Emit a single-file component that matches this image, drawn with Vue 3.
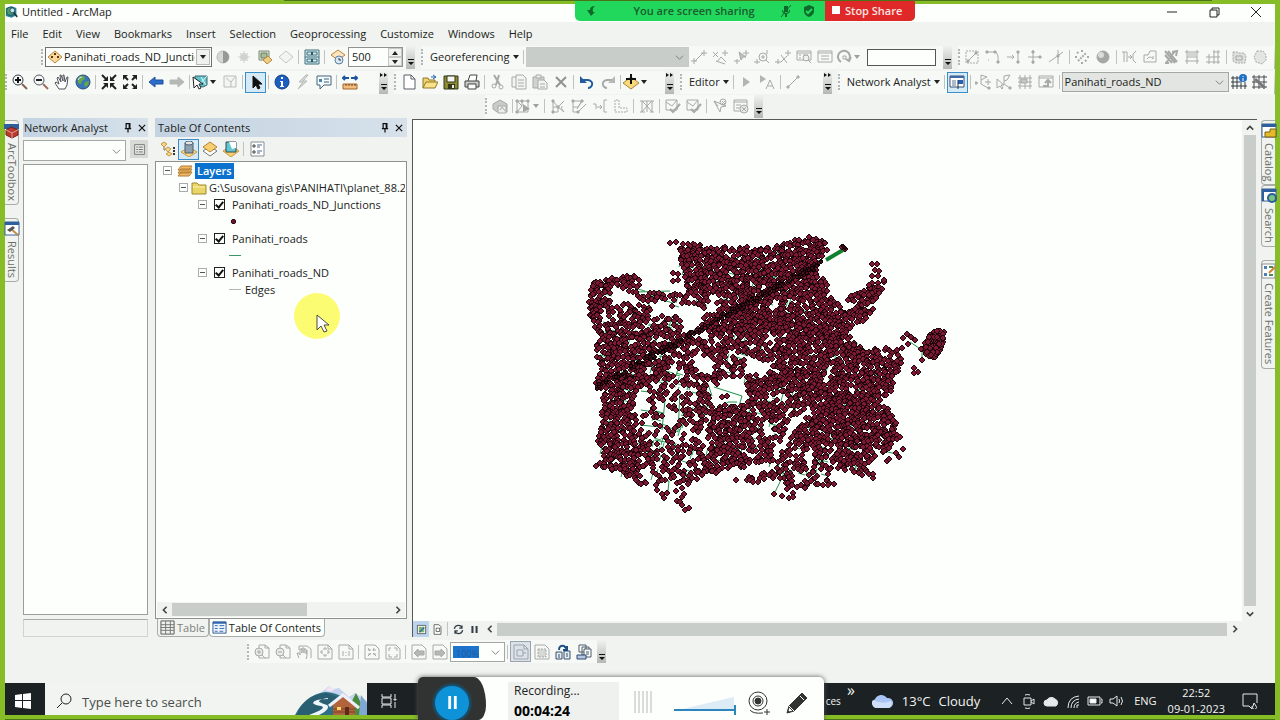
<script setup>
import { ref } from 'vue';

const menus = ['File', 'Edit', 'View', 'Bookmarks', 'Insert', 'Selection', 'Geoprocessing', 'Customize', 'Windows', 'Help'];

// Icon bodies, all drawn on a 16x16 grid
const icons = {
  contrast: '<circle cx="8" cy="8" r="6" fill="#d5d8d5" stroke="#b4b8b4"/><path d="M8 2a6 6 0 0 1 0 12z" fill="#969a96" stroke="none"/>',
  sun: '<circle cx="8" cy="8" r="4" fill="#d3d6d3" stroke="none"/><path d="M8 2v12M2 8h12M4 4l8 8M12 4l-8 8" stroke="#cfd2cf"/>',
  swipe: '<path d="M2 2h10v9H2z" fill="#dbe6cf" stroke="#7c8777"/><path d="M4 4h6v5H4z" fill="#a5bf99" stroke="#6b7d68"/><path d="M6 11l5-4 4 4-5 4z" fill="#f2cd86" stroke="#b9883e"/>',
  diamond: '<path d="M1 8l7-6 7 6-7 6z" fill="#f3f4f2" stroke="#c3c6c3"/>',
  cabinet: '<path d="M1 1h14v14H1z" fill="#d8ecee" stroke="#3f6f7c"/><path d="M1 8h14M3 3h10v3H3zM3 10h10v3H3z" stroke="#3f6f7c"/><path d="M7 3h2v3H7zM7 10h2v3H7z" fill="#2a5966" stroke="none"/>',
  layertime: '<path d="M1 6l7-5 7 5-7 5z" fill="#fbe6c1" stroke="#c08334"/><circle cx="9" cy="11" r="4" fill="#d8e8f4" stroke="#5d7e9d"/><path d="M9 9v2h2" stroke="#234"/>',
  links: '<path d="M4 12L12 4M3 9v6M0 12h6M13 1v6M10 4h6"/>',
  autolink: '<path d="M4 12l9 3M1 3l5 5M1 8l5-5M13 1v6M10 4h6M5 13l4-5 5 5"/>',
  selectlink: '<path d="M4 10v5M1 12h6M13 1v6M10 4h6M6 3l2 8 2-3h3z" fill="#bfc3bf"/>',
  zoomlink: '<circle cx="9" cy="8" r="4"/><path d="M9 6v4M7 8h4M12 11l3 3M3 10v5M0 13h6M13 1v4"/>',
  deletelink: '<path d="M3 10v5M0 13h6M13 1v6M10 4h6M6 6l6 8M12 7l-6 6"/>',
  tablezoom: '<path d="M1 2h14v9H1zM1 4h14M3 6h2M3 9h2M7 6h5"/><circle cx="10" cy="9" r="3" fill="#edf0ed"/><path d="M12 11l3 3"/>',
  table: '<path d="M1 2h14v11H1zM1 4h14M4 7h2M4 10h2M10 7h2M10 10h2M6 7h4M6 10h4"/>',
  rotate: '<path d="M5 13a6 6 0 1 1 8-2M10 10l3 2 2-4" stroke-width="2"/><path d="M7 7h3v3H7z"/>',
  sketchbox: '<path d="M2 2h12v12H2z" stroke-dasharray="2 1"/><path d="M4 12l8-8"/><path d="M3 11h2v2H3zM11 3h2v2h-2z" fill="#a3a7a3"/>',
  curve: '<path d="M2 3h8q4 1 3 11"/><path d="M1 2h2v2H1zM9 2h2v2H9zM12 12h2v2h-2z" fill="#a3a7a3"/><path d="M3 11h1"/>',
  intersectline: '<path d="M1 8h7M6 6l2 2-2 2M12 2v12"/><path d="M11 2h2v2h-2zM11 12h2v2h-2z" fill="#a3a7a3"/>',
  extendline: '<path d="M6 1v14M1 8h13"/><path d="M5 2h2v2H5zM5 12h2v2H5zM12 7h2v2h-2z" fill="#a3a7a3"/>',
  crossing: '<path d="M1 13L15 3M10 1v14"/><path d="M9 6h2v2H9z" fill="#a3a7a3"/>',
  scatter: '<path d="M4 12l8-8M8 1v2M8 13v2M1 8h2M13 8h2M3 3l2 2M11 11l2 2" stroke-width="2" stroke-dasharray="2 1"/>',
  sphere: '<circle cx="8" cy="8" r="6" fill="#a4a8a4" stroke="#a4a8a4"/><circle cx="6" cy="6" r="3" fill="#dadcda" stroke="none"/>',
  mergeline: '<path d="M1 3h5v10M3 3v10M7 8h3M9 6l2 2-2 2M15 2l-3 3v6l3 3"/>',
  reshape: '<path d="M2 13V6h4l2-4h6v11zM5 10q3-4 6 0M11 10V7"/>',
  modify: '<path d="M2 2l10 12M5 2l9 11M2 6l7 8M9 3l5-1-1 5M3 14l9-12M2 14h4" stroke-width="2"/>',
  grid1: '<path d="M3 1v14M13 1v14M1 3h14M1 12h14M3 8h10"/><path d="M4 4h8v4H4z" fill="#d2d5d2" stroke="none"/>',
  grid2: '<path d="M4 5v10M9 1v14M13 1v14M1 8h14M1 13h14M8 3h7"/>',
  cloudbox: '<path d="M2 3h4l2 1h5l2 3-1 7H5l-3-2z" fill="#dcdfdc" stroke-dasharray="2 1"/><path d="M5 7h6v4H5z"/>',
  hexagon: '<path d="M5 2h6l3 4v5l-4 4-6-2-2-5z" fill="#e2e5e2" stroke-dasharray="2 1"/>',
  zoomin: '<circle cx="6" cy="6" r="5" fill="#f3f8fa" stroke="#333a40"/><path d="M3 6h6M6 3v6" stroke="#111" stroke-width="2"/><path d="M10 10l5 5" stroke="#8a6050" stroke-width="2"/>',
  zoomout: '<circle cx="6" cy="6" r="5" fill="#f3f8fa" stroke="#555c60"/><path d="M3 6h6" stroke="#222" stroke-width="2"/><path d="M10 10l5 5" stroke="#a0705c" stroke-width="2"/>',
  hand: '<path d="M5 15L1 9l1-1 3 2-2-6 1-1 3 5-1-7h1l2 6V1h1l1 7 2-5h1l-1 8-2 4z" fill="#fff" stroke="#50545a"/>',
  globe: '<circle cx="8" cy="8" r="7" fill="#3779b8" stroke="#2a4d73"/><path d="M3 4q3-3 6-2l1 3-3 2-1 3-3-1zM10 8l4-1q0 4-3 6l-2-2z" fill="#6aa44c" stroke="none"/><path d="M3 6q1-3 4-3" stroke="#d7f0f8"/>',
  fixedin: '<path d="M1 1l4 4M15 1l-4 4M1 15l4-4M15 15l-4-4" stroke="#222" stroke-width="2"/><path d="M7 2v5H2zM9 2v5h5zM7 14V9H2zM9 14V9h5z" fill="#222" stroke="none"/>',
  fixedout: '<path d="M2 2l4 4M14 2l-4 4M2 14l4-4M14 14l-4-4" stroke="#222" stroke-width="2"/><path d="M1 6V1h5zM15 6V1h-5zM1 10v5h5zM15 10v5h-5z" fill="#222" stroke="none"/>',
  back: '<path d="M1 8l6-5v3h8v4H7v3z" fill="#2c6ccb" stroke="#1f4f9f"/>',
  forward: '<path d="M15 8L9 3v3H1v4h8v3z" fill="#b5b8b5" stroke="#b5b8b5"/>',
  selectfeat: '<path d="M3 2h12v9l-4 2-8-2z" fill="#5fc4cb" stroke="#3d6268"/><path d="M15 2L7 11M9 3l5 8" stroke="#e2f4f3"/><path d="M1 3l1 11 3-3 2 4 2-1-2-4h4z" fill="#fff" stroke="#222"/>',
  clearfeat: '<path d="M2 2h12v11H2z" fill="#f3f5f3" stroke="#b9bdb9"/><path d="M4 4l5 4 4-5M9 8v5" stroke="#b9bdb9"/>',
  pointer: '<path d="M5 2v12l3-3 2 4 2-1-2-4h4z" fill="#111" stroke="#111"/>',
  info: '<circle cx="8" cy="8" r="7" fill="#1d5fc0" stroke="#153e80"/><path d="M7 3h2v2H7zM6 7h3v5h1v1H6v-1h1V8H6z" fill="#fff" stroke="none"/>',
  bolt: '<path d="M11 1L4 8h4l-5 7 9-8H8l5-6z" fill="#d8dbd8" stroke="#b5b8b5"/>',
  popup: '<path d="M1 2h14v9H8l-4 4v-4H1z" fill="#f6fafc" stroke="#44637b"/><path d="M3 5h3v3H3z" fill="#4784b4" stroke="none"/><path d="M8 5h5M8 8h5" stroke="#44637b"/>',
  measure: '<path d="M1 10h14v5H1z" fill="#f3bd7d" stroke="#a3662c"/><path d="M4 10v2M7 10v2M10 10v2M13 10v2" stroke="#6c3f17"/><path d="M1 4h6M9 4h6M3 2L1 4l2 2M13 2l2 2-2 2" stroke="#1d559f" stroke-width="2"/>',
  newdoc: '<path d="M3 1h7l4 4v10H3z" fill="#fff" stroke="#596068"/><path d="M10 1v4h4" stroke="#596068"/>',
  open: '<path d="M1 14V4h5l1 2h6v3" fill="#f0d56e" stroke="#8e7626"/><path d="M1 14l3-6h12l-3 6z" fill="#f8e38a" stroke="#8e7626"/><path d="M9 3h4M11 1l3 2-3 2" stroke="#1f65ab"/>',
  save: '<path d="M1 2h14v13H1z" fill="#8a8b31" stroke="#35371c"/><path d="M4 2h8v6H4z" fill="#f4f4f0" stroke="#35371c"/><path d="M5 10h7v5H5z" fill="#35371c" stroke="none"/><path d="M9 11h2v3H9z" fill="#eee" stroke="none"/>',
  print: '<path d="M4 7l2-6h7l-1 6" fill="#fff" stroke="#444"/><path d="M1 7h14v6H1z" fill="#c8ccc8" stroke="#444"/><path d="M4 10h8v5H4z" fill="#fff" stroke="#444"/>',
  cut: '<path d="M4 1l6 10M9 1L6 11" stroke-width="2"/><circle cx="4" cy="12" r="2"/><circle cx="11" cy="13" r="2"/>',
  copy: '<path d="M1 3h8v10H1z" fill="#f3f5f3"/><path d="M5 1h7l3 3v11H5z" fill="#f3f5f3"/><path d="M7 6h6M7 9h6M7 12h6"/>',
  paste: '<path d="M1 3h11v11H1z" fill="#d0d3d0"/><path d="M4 1h5v3H4z" fill="#eee"/><path d="M6 6h6l3 3v6H6z" fill="#f3f5f3"/><path d="M8 10h5M8 13h5"/>',
  cross: '<path d="M3 3l10 10M13 3L3 13" stroke="#8f938f" stroke-width="2"/>',
  undo: '<path d="M4 6h5q5 1 4 5-1 3-4 3" stroke="#225c9d" stroke-width="2"/><path d="M1 2v7h7z" fill="#225c9d" stroke="none"/>',
  redo: '<path d="M12 6H7q-5 1-4 5 1 3 4 3" stroke-width="2"/><path d="M15 2v7H8z" fill="#b5b8b5" stroke="none"/>',
  adddata: '<path d="M0 9l8-6 8 6-8 6z" fill="#f9d979" stroke="#a3843b"/><path d="M8 0v10M3 5h10" stroke="#111" stroke-width="2"/>',
  play: '<path d="M5 3v10l7-5z" fill="#b2b5b2" stroke="none"/>',
  playa: '<path d="M1 1v8l6-4z" fill="#b2b5b2" stroke="none"/><path d="M7 15l4-9 4 9M9 12h4"/>',
  segment: '<path d="M3 13L13 3"/><path d="M2 12h2v2H2zM12 2h2v2h-2z" fill="#b5b8b5"/>',
  nawindow: '<path d="M1 2h14v11H1z" fill="#fff" stroke="#3a5374"/><path d="M1 2h14v2H1z" fill="#3d6aa5" stroke="none"/><path d="M3 7h4M3 9h4M3 11h4" stroke="#5d7690"/><path d="M9 6h5v4H9z" fill="#2760b5" stroke="none"/><path d="M9 6v9" stroke="#1d3555"/>',
  nalocation: '<path d="M1 9h2M6 1v9l7 4M6 1l6 2-6 3M10 8h6M13 5v6"/><path d="M0 8h2v2H0zM13 13h2v2h-2z" fill="#b2b5b2"/>',
  namove: '<path d="M1 5v9l3-2 2 3 1-1-2-3h3zM8 2v8l6 4M8 2l6-1-3 5-3 1"/><path d="M13 13h2v2h-2z" fill="#b2b5b2"/>',
  nabarrier: '<path d="M3 1v14M8 1v14M13 1v14M1 4h14M1 8h14M1 12h14"/><path d="M4 5h6v4H4z" fill="#c4c8c4"/>',
  nadirection: '<path d="M1 2h14v11H1zM1 4h14"/><path d="M5 12h5V7M7 9l3-3 3 3" stroke-width="2"/>',
  netinfo: '<path d="M2 2v13M6 2v13M10 7v8M14 8v7M0 4h9M0 8h9M0 12h16" stroke="#333c44"/><circle cx="12" cy="4" r="4" fill="#1f6fc4" stroke="none"/><path d="M12 2v1M12 4v3" stroke="#fff"/>',
  nettool: '<path d="M2 1v14M7 1v14M12 1v14M0 3h15M0 8h15M0 13h15" stroke="#444c50"/><path d="M3 5l10 9" stroke="#777" stroke-width="3"/>',
  topobox: '<path d="M1 6l7-4 7 4v8H5l-4-3z" fill="#c8ccc8"/><path d="M6 8h8v7H6z" fill="#eee"/><path d="M8 12l2-3 3 4"/>',
  topoedit: '<path d="M2 3h11v11H2zM2 3l5 5M2 14l5-6V3"/><path d="M1 2h2v2H1zM6 2h2v2H6zM12 2h2v2h-2zM1 13h2v2H1z" fill="#a2a6a2"/><path d="M8 6v8l7-3z" fill="#a2a6a2" stroke="none"/>',
  topomod: '<path d="M3 3v11M3 14h5V9l6 5M3 3l5 6 6-6M12 8q-2 2 2 6M3 9h5"/><path d="M2 2h2v2H2zM2 13h2v2H2zM7 8h2v2H7z" fill="#a3a7a3"/>',
  topoalign: '<path d="M2 3h9l-5 8M2 3v11h5l8-8M2 9h5l4-6"/><path d="M1 2h2v2H1zM10 2h2v2h-2zM6 13h2v2H6z" fill="#a3a7a3"/>',
  topocut: '<path d="M1 6h3v5M5 9h4M8 7l2 2-2 2M15 2h-3v12h3"/>',
  topoduct: '<path d="M2 2v12h12v-4H6V2z" stroke-dasharray="2 1"/>',
  topobuild: '<path d="M3 3v11M8 3v11M13 3v11M3 3l5 5 5-5M3 14l5-6 5 6M1 3h14M1 14h5M11 14h4"/>',
  topocheck: '<path d="M1 2h11v10H1zM1 4l6 4 5-6"/><path d="M5 11l3 3 7-8" stroke-width="2"/>',
  topoerror: '<path d="M2 3l6 11 1-5 5-1zM2 3l4 5"/><circle cx="11" cy="4" r="3"/><path d="M10 3l3 3M13 3l-3 3"/>',
  topolist: '<path d="M1 2h13v11H1zM1 4h13M3 7h5M3 10h4"/><circle cx="11" cy="11" r="4" fill="#e8ebe8"/><path d="M9 9l4 4M13 9l-4 4"/>',
  pagein: '<path d="M5 1h6l4 3v10H5zM11 1v3h4"/><circle cx="5" cy="8" r="4" fill="#e8ebe8"/><path d="M3 8h4M5 6v4M8 11l3 3"/>',
  pageout: '<path d="M5 1h6l4 3v10H5zM11 1v3h4"/><circle cx="5" cy="8" r="4" fill="#e8ebe8"/><path d="M3 8h4M8 11l3 3"/>',
  pagehand: '<path d="M3 2h8l4 3v9M3 2v4M3 14L1 9h2l1 2V5h2v4V4h2v5V5h2v5l1-4v6l-1 3"/>',
  pagefit: '<path d="M1 1h10l4 4v10H1zM11 1v4h4M8 3v2M8 11v2M3 8h2M11 8h2M6 5h4M6 11h4M5 6v4M11 6v4"/>',
  page1: '<path d="M1 1h10l4 4v10H1zM11 1v4h4M5 7v5M11 7v5M8 8v1M8 11v1"/>',
  pagefixin: '<path d="M1 1h10l4 4v10H1zM4 4l2 3M10 4L9 7M4 12l3-3M12 12l-3-3M4 6h3M9 6h3M4 10h3M9 10h3"/>',
  pagefixout: '<path d="M1 1h10l4 4v10H1zM4 7V4h2M9 4h3v3M4 10v3h3M9 13h3v-3"/>',
  pageback: '<path d="M1 1h10l4 4v10H1z"/><path d="M3 9l4-4v2h6v4H7v2z" fill="#b5b8b5"/>',
  pagefwd: '<path d="M1 1h10l4 4v10H1z"/><path d="M13 9L9 5v2H3v4h6v2z" fill="#b5b8b5"/>',
  toggledraft: '<path d="M1 1h10l4 4v10H1zM11 1v4h4M4 6h6v6H4zM10 9h3" stroke="#9aa3ad"/>',
  focusframe: '<path d="M1 1h10l4 4v10H1z"/><path d="M4 5h8v8H4z" fill="#d5d8d5" stroke-dasharray="2 1"/>',
  changelayout: '<path d="M1 8h6v7H1zM9 7h6v8H9z" fill="#e4eef6" stroke="#3b4f66"/><path d="M4 6q0-5 5-4l3 3M12 2v4H8" stroke="#1d4f87" stroke-width="2"/><path d="M3 11h2M3 13h2M11 10h2M11 12h2" stroke="#3b4f66"/>',
  datadriven: '<path d="M3 1h7v7H3zM6 3h7v8H6z" fill="#fff" stroke="#4b5a68"/><path d="M8 5h7v8H8zM10 8h3M10 10h3" fill="#fff" stroke="#4b5a68"/><path d="M1 11h9v4H1z" fill="#b8c9df" stroke="#2f4974"/>',
  listdraw: '<path d="M1 3l3-2 3 2-3 3zM5 8l3-2 3 2-3 3zM6 13l3-2 3 2-3 2z" fill="#f8d685" stroke="#c29a45"/><path d="M4 6v3h1" stroke="#777"/><path d="M13 7h2M13 10h2M13 13h2" stroke="#333" stroke-width="2"/>',
  listsource: '<path d="M0 11l8-5 8 5-8 5z" fill="#fad888" stroke="#c89a44"/><path d="M4 2h8v10H4z" fill="#8fa0af" stroke="#4f5d6a"/><ellipse cx="8" cy="2" rx="4" ry="2" fill="#dfe6ea" stroke="#4f5d6a"/>',
  listvis: '<path d="M1 10l7-5 7 5-7 5z" fill="#fff" stroke="#777"/><path d="M1 6l7-5 7 5-7 5z" fill="#f9ce71" stroke="#b28336"/>',
  listsel: '<path d="M0 10l8-5 8 5-8 6z" fill="#f9ce71" stroke="#c29a45"/><path d="M3 1h10v10H3z" fill="#5fc7d3" stroke="#35474f"/><path d="M6 1l3 7 4-1V1z" fill="#fff" stroke="none"/>',
  options: '<path d="M2 1h13v14H2z" fill="#fff" stroke="#8a8f94"/><path d="M4 4h2v2H4zM4 10h2v2H4z" stroke="#444"/><path d="M8 4h5M8 6h3M8 10h5M8 12h3" stroke="#4f6a8c"/>',
  properties: '<path d="M2 2h12v12H2z" fill="#e8ebe8" stroke="#666"/><path d="M4 5h2M4 8h2M4 11h2M7 5h5M7 8h5M7 11h5" stroke="#555"/>',
  layers: '<path d="M1 13l3-4h11l-3 4zM1 10l3-4h11l-3 4zM1 7l3-4h11l-3 4z" fill="#f1b866" stroke="#b17c32"/>',
  folder: '<path d="M1 14V3h5l2 2h7v9z" fill="#e9d568" stroke="#9d8a2e"/><path d="M2 7h12" stroke="#fff3a5"/>',
  tabtable: '<path d="M1 1h14v14H1z" fill="#eef1ee" stroke="#555"/><path d="M1 5h14M1 8h14M1 11h14M6 1v14M11 1v14" stroke="#6f7571"/>',
  tabtoc: '<path d="M1 2h14v12H1z" fill="#eef5fc" stroke="#2b5592"/><path d="M1 2h14v2H1z" fill="#2f65ad" stroke="none"/><path d="M3 6h3M3 9h3M3 12h3M8 6h5M8 9h5M8 12h4" stroke="#2f65ad"/>',
  toolbox: '<path d="M0 1h15v5H0z" fill="#2d5f9f" stroke="none"/><path d="M2 7l5-3 7 3v5l-6 3-6-3z" fill="#b93b30" stroke="#712019"/><path d="M2 7l6 3 6-3M8 10v5" stroke="#e79a8b"/>',
  results: '<path d="M1 1h14v13H1z" fill="#fff" stroke="#39608f"/><path d="M1 1h14v3H1z" fill="#2d5f9f" stroke="none"/><path d="M7 8l7 6" stroke="#c28b4a" stroke-width="2"/><path d="M3 9l6-4 2 2-5 4z" fill="#555" stroke="none"/>',
  catalog: '<path d="M1 1h14v13H1z" fill="#fff" stroke="#39608f"/><path d="M1 1h14v3H1z" fill="#2d5f9f" stroke="none"/><path d="M4 14V9h5V6h6v8z" fill="#e4ba28" stroke="#7b6214"/>',
  search: '<path d="M1 1h14v12H1z" fill="#fff" stroke="#39608f"/><path d="M1 1h14v3H1zM3 4v9H1V4z" fill="#2d5f9f" stroke="none"/><circle cx="11" cy="10" r="4" fill="#7dc17e" stroke="#285d9d" stroke-width="2"/>',
  create: '<path d="M1 1h13v14H1z" fill="#fff" stroke="#8a8f94"/><path d="M3 3h3v3H3zM3 10h3v3H3z" fill="#4d7fb5" stroke="none"/><path d="M8 4h4M8 12h4" stroke="#4c8c53" stroke-width="2"/><path d="M8 10l6-6" stroke="#d08531" stroke-width="2"/>',
  pin: '<path d="M5 1h6v8H5zM10 1v8M3 9h10M8 9v6" stroke="#111" stroke-width="2"/>',
  close: '<path d="M3 3l10 10M13 3L3 13" stroke="#111" stroke-width="2"/>',
  dataview: '<path d="M2 2h12v12H2z" fill="#fff" stroke="#333"/><path d="M4 4h8v8H4z" fill="#84b66c" stroke="none"/><path d="M5 12l7-7" stroke="#2c6fa6" stroke-width="2"/>',
  layoutview: '<path d="M3 1h7l3 3v11H3z" fill="#fff" stroke="#333"/><path d="M6 6h5v5H6z" stroke="#333"/>',
  refresh: '<path d="M2 7q1-5 6-5 4 0 5 4M14 9q-1 5-6 5-4 0-5-4M13 2v4H9M3 14v-4h4" stroke="#333d48" stroke-width="2"/>',
  pause: '<path d="M5 3v10M11 3v10" stroke="#333d48" stroke-width="3"/>',
};

const bt = (icon, extra = {}) => ({ type: 'button', icon, ...extra });
const sep = { type: 'sep' };
const row = (...names) => names.map((n) => (n === '|' ? sep : bt(n)));

const rows = [
  {
    name: 'effects',
    bars: [
      {
        label: 'Effects',
        items: [
          { type: 'select', text: 'Panihati_roads_ND_Junctions', kind: 'layer', label: 'Layer' },
          ...row('contrast', 'sun', 'swipe', 'diamond', '|', 'cabinet', '|', 'layertime'),
          { type: 'spin' },
        ],
      },
      {
        label: 'Georeferencing',
        items: [
          { type: 'menu', text: 'Georeferencing' },
          sep,
          { type: 'select', text: '', kind: 'georef', label: 'Georeferencing layer' },
          ...row('links', 'autolink', 'selectlink', 'zoomlink', 'deletelink', 'tablezoom', 'table'),
          bt('rotate', { arrow: true, muted: true }),
          { type: 'text' },
        ],
      },
      {
        label: 'Advanced editing',
        items: row('sketchbox', 'curve', 'intersectline', 'extendline', 'crossing', '|', 'scatter', 'sphere', '|', 'mergeline', 'reshape', 'modify', 'grid1', 'grid2', '|', 'cloudbox', 'hexagon'),
      },
    ],
  },
  {
    name: 'tools',
    bars: [
      {
        label: 'Tools',
        more: true,
        items: [
          ...row('zoomin', 'zoomout', 'hand', 'globe', '|', 'fixedin', 'fixedout', '|', 'back', 'forward', '|'),
          bt('selectfeat', { arrow: true }),
          ...row('clearfeat', '|'),
          bt('pointer', { active: true }),
          ...row('|', 'info', 'bolt', 'popup', '|', 'measure'),
          { type: 'gap' },
        ],
      },
      {
        label: 'Standard',
        more: true,
        items: [
          ...row('newdoc', 'open', 'save', 'print', '|', 'cut', 'copy', 'paste', 'cross', '|', 'undo', 'redo', '|'),
          bt('adddata', { arrow: true }),
          { type: 'gap', narrow: true },
        ],
      },
      {
        label: 'Editor',
        more: true,
        items: [{ type: 'menu', text: 'Editor' }, ...row('|', 'play', 'playa', '|', 'segment'), { type: 'gap' }],
      },
      {
        label: 'Network Analyst',
        items: [
          { type: 'menu', text: 'Network Analyst' },
          sep,
          bt('nawindow', { active: true }),
          ...row('|', 'nalocation', 'namove', 'nabarrier', 'nadirection', '|'),
          { type: 'select', text: 'Panihati_roads_ND', kind: 'network', label: 'Network dataset' },
          ...row('netinfo', 'nettool'),
        ],
      },
    ],
  },
  {
    name: 'topology',
    bars: [
      {
        label: 'Topology',
        items: [
          ...row('topobox', '|'),
          bt('topoedit', { arrow: true, muted: true }),
          ...row('|', 'topomod', 'topoalign', 'topocut', 'topoduct', '|', 'topobuild', '|', 'topocheck', 'topocheck', '|', 'topoerror', 'topolist'),
        ],
      },
    ],
  },
];

const layoutRow = {
  name: 'layout',
  bars: [
    {
      label: 'Layout',
      items: [
        ...row('pagein', 'pageout', 'pagehand', 'pagefit', 'page1', '|', 'pagefixin', 'pagefixout', '|', 'pageback', 'pagefwd'),
        { type: 'select', text: '100%', kind: 'scale', label: 'Page zoom' },
        sep,
        bt('toggledraft', { pressed: true }),
        ...row('focusframe', 'changelayout', 'datadriven'),
      ],
    },
  ],
};

const tree = ref([
  { level: 1, text: 'Layers', icon: 'layers', selected: true },
  { level: 2, text: 'G:\\Susovana gis\\PANIHATI\\planet_88.2', icon: 'folder' },
  { level: 3, text: 'Panihati_roads_ND_Junctions', checked: true },
  { level: 4, symbol: 'point' },
  { level: 3, text: 'Panihati_roads', checked: true },
  { level: 4, symbol: 'road' },
  { level: 3, text: 'Panihati_roads_ND', checked: true },
  { level: 4, symbol: 'edge', text: 'Edges' },
]);

const georefValue = ref('');
const threshold = ref('500');
const volume = ref(100);

// ---- map ----
// small seeded generator so that the map is the same on every load
let seed = 20230109;
const rnd = () => {
  seed = (seed * 1664525 + 1013904223) % 4294967296;
  return seed / 4294967296;
};

const inside = (x, y, poly) => {
  let hit = false;
  for (let i = 0, j = poly.length - 1; i < poly.length; j = i++) {
    const [xi, yi] = poly[i];
    const [xj, yj] = poly[j];
    if (yi > y !== yj > y && x < ((xj - xi) * (y - yi)) / (yj - yi) + xi) hit = !hit;
  }
  return hit;
};

const town = [
  [589, 283], [601, 280], [625, 276], [634, 275], [641, 281], [641, 291], [652, 293], [672, 292], [688, 294], [684, 272], [680, 258],
  [678, 243], [700, 244], [722, 247], [745, 247], [772, 247], [792, 240], [810, 237], [826, 241], [828, 252], [820, 260], [818, 274],
  [828, 284], [827, 294], [838, 302], [845, 311], [849, 317], [848, 309], [846, 299], [853, 294], [866, 290], [870, 284], [881, 277],
  [885, 282], [883, 292], [876, 302], [871, 314], [862, 322], [850, 329], [852, 342], [866, 350], [882, 347], [897, 350], [902, 357],
  [899, 371], [893, 382], [893, 391], [879, 402], [890, 411], [896, 421], [898, 437], [893, 448], [878, 455], [868, 463], [870, 474],
  [860, 475], [846, 470], [838, 472], [833, 484], [815, 488], [803, 492], [788, 486], [779, 480], [762, 485], [745, 483], [742, 477],
  [756, 477], [768, 470], [779, 463], [760, 464], [741, 468], [716, 473], [697, 480], [684, 486], [672, 480], [658, 487], [640, 484],
  [620, 473], [596, 466], [602, 452], [597, 440], [602, 420], [602, 400], [594, 386], [599, 370], [595, 355], [598, 336], [591, 322], [588, 303],
];

const holes = [
  [[614, 287], [622, 290], [625, 297], [634, 293], [640, 302], [632, 304], [622, 301], [614, 301]],
  [[652, 307], [663, 304], [676, 309], [687, 309], [690, 303], [706, 311], [704, 320], [693, 331], [687, 333], [682, 316], [660, 314], [654, 318]],
  [[709, 294], [717, 295], [720, 303], [716, 313], [708, 314]],
  [[693, 355], [708, 357], [717, 363], [709, 373], [694, 366]],
  [[744, 362], [766, 361], [772, 365], [766, 374], [751, 373]],
  [[706, 382], [722, 388], [728, 377], [746, 378], [747, 400], [737, 406], [728, 402], [714, 406], [711, 395]],
  [[639, 391], [650, 391], [648, 402], [652, 420], [648, 424], [638, 420]],
  [[663, 406], [670, 411], [677, 420], [675, 426], [664, 421]],
  [[807, 407], [812, 408], [798, 426], [790, 438], [782, 451], [777, 454], [775, 448], [785, 437], [790, 422]],
  [[700, 430], [705, 431], [706, 440], [701, 439]],
  [[806, 455], [812, 456], [810, 464], [805, 463]],
  [[640, 472], [652, 468], [652, 479], [643, 480]],
  [[849, 300], [856, 303], [850, 312], [846, 309]],
  [[774, 300], [780, 298], [777, 309], [772, 310]],
  [[829, 365], [832, 366], [828, 384], [824, 384]],
  [[786, 302], [792, 301], [789, 306], [785, 307]],
];

// a junction symbol must not reach into an open area either
const open = (x, y) =>
  holes.some((h) => inside(x, y, h) || inside(x - 1, y, h) || inside(x + 1, y, h) || inside(x, y - 1, h) || inside(x, y + 1, h));

// looser parts of the town: [polygon, share of junctions kept]
const loose = [
  [[[636, 388], [690, 370], [700, 400], [690, 440], [636, 440]], 0.4],
  [[[640, 440], [715, 430], [710, 485], [640, 485]], 0.55],
  [[[604, 284], [690, 294], [700, 330], [600, 330]], 0.6],
  [[[740, 400], [800, 385], [800, 440], [745, 460]], 0.62],
  [[[645, 335], [780, 330], [780, 380], [645, 372]], 0.6],
  [[[772, 448], [838, 440], [838, 495], [735, 495]], 0.52],
];

const singles = [
  [670, 243], [676, 242], [673, 273], [678, 274], [673, 281], [678, 280], [842, 247], [845, 249], [872, 264], [877, 264], [875, 270],
  [879, 271], [872, 276], [878, 276], [884, 280], [869, 285], [903, 338], [907, 334], [911, 337], [915, 340], [908, 344], [902, 348],
  [921, 349], [922, 360], [914, 368], [918, 372], [914, 373], [897, 350], [657, 490], [662, 494], [667, 493], [664, 498], [676, 491],
  [682, 488], [677, 501], [682, 497], [684, 494], [680, 502], [682, 505], [685, 510], [689, 508], [774, 494], [782, 496], [789, 498],
  [793, 493], [787, 489], [793, 497], [900, 437], [903, 449], [899, 457], [896, 453], [887, 461], [889, 459], [873, 478], [873, 474],
  [736, 480], [834, 484], [722, 397], [727, 396], [649, 400], [651, 412], [654, 392], [717, 303], [704, 318], [643, 416], [646, 415],
  [655, 301], [665, 299], [648, 296],
];

const junctions = [];
for (let y = 236; y < 496; y += 3) {
  for (let x = 586; x < 906; x += 3) {
    const px = x + rnd() * 4 - 2;
    const py = y + rnd() * 4 - 2;
    if (!inside(px, py, town) || open(px, py)) continue;
    const area = loose.find(([poly]) => inside(px, py, poly));
    if (rnd() < (area ? area[1] * 0.8 : 0.78)) junctions.push([px, py]);
  }
}
const cluster = [[925, 341], [934, 330], [944, 331], [943, 345], [936, 358], [926, 356], [923, 347]];
for (let i = 0; i < 170; i++) {
  const px = 922 + rnd() * 23;
  const py = 328 + rnd() * 31;
  if (inside(px, py, cluster)) junctions.push([px, py]);
}
junctions.push(...singles);

const railway = [];
for (let i = 0; i < 230; i++) {
  const t = rnd();
  railway.push([596 + t * 226, 387 - t * 125 + rnd() * 6 - 3]);
}

// side streets visible between the junctions
const streets = [];
for (let i = 0; i < 900; i++) {
  const px = 600 + rnd() * 285;
  const py = 250 + rnd() * 225;
  if (!inside(px, py, town) || !inside(px + 6, py + 6, town) || open(px, py) || open(px + 5, py + 2)) continue;
  streets.push(rnd() > 0.5 ? `M${px | 0} ${py | 0}l7 2` : `M${px | 0} ${py | 0}l-2 7`);
}

const dots = (list) => list.map(([x, y]) => [Math.round(x), Math.round(y)]);
const junctionDots = dots(junctions);
const railwayDots = dots(railway);
</script>

<template>
  <div class="desktop">
    <header class="titlebar">
      <svg class="app-icon" viewBox="0 0 16 16">
        <path d="M1 3l7-2 6 2v9l-6 3-7-2z" fill="#2a7f9a" />
        <circle cx="7" cy="7" r="5" fill="#4a9c6a" stroke="#174b63" />
        <circle cx="9" cy="6" r="3" fill="#bfe4e8" stroke="#20485c" />
        <path d="M11 9l4 5" stroke="#1e3344" stroke-width="2" />
      </svg>
      <h1>Untitled - ArcMap</h1>
      <div class="window-buttons">
        <button aria-label="Minimize"><svg viewBox="0 0 12 12"><path d="M1 6h10" /></svg></button>
        <button aria-label="Restore"><svg viewBox="0 0 12 12"><path d="M2 4h7v7H2zM4 4V2h7v7H9" /></svg></button>
        <button aria-label="Close"><svg viewBox="0 0 12 12"><path d="M1 1l10 10M11 1L1 11" /></svg></button>
      </div>
    </header>

    <nav class="menubar">
      <button v-for="m in menus" :key="m">{{ m }}</button>
    </nav>

    <template v-for="r in [...rows, layoutRow]" :key="r.name">
      <!-- workspace sits between the upper toolbars and the layout toolbar -->
      <main v-if="r.name === 'layout'" class="workspace">
        <aside class="rail rail-left">
          <button class="rail-tab toolbox"><svg class="ico" viewBox="0 0 16 16" v-html="icons.toolbox"></svg>ArcToolbox</button>
          <button class="rail-tab results"><svg class="ico" viewBox="0 0 16 16" v-html="icons.results"></svg>Results</button>
        </aside>

        <section class="panel analyst">
          <div class="panel-head">
            <h2>Network Analyst</h2>
            <button aria-label="Pin"><svg viewBox="0 0 16 16" v-html="icons.pin"></svg></button>
            <button aria-label="Close"><svg viewBox="0 0 16 16" v-html="icons.close"></svg></button>
          </div>
          <div class="analyst-pick">
            <div class="combo">
              <select aria-label="Analysis layer"><option></option></select>
              <svg class="chevron" viewBox="0 0 10 10"><path d="M1 3l4 4 4-4" /></svg>
            </div>
            <button class="props" aria-label="Properties"><svg class="ico" viewBox="0 0 16 16" v-html="icons.properties"></svg></button>
          </div>
          <div class="analyst-list"></div>
          <div class="analyst-status"></div>
        </section>

        <section class="panel contents">
          <div class="panel-head">
            <h2>Table Of Contents</h2>
            <button aria-label="Pin"><svg viewBox="0 0 16 16" v-html="icons.pin"></svg></button>
            <button aria-label="Close"><svg viewBox="0 0 16 16" v-html="icons.close"></svg></button>
          </div>
          <div class="contents-tools">
            <button class="tool" aria-label="List By Drawing Order"><svg class="ico" viewBox="0 0 16 16" v-html="icons.listdraw"></svg></button>
            <button class="tool active" aria-label="List By Source"><svg class="ico" viewBox="0 0 16 16" v-html="icons.listsource"></svg></button>
            <button class="tool" aria-label="List By Visibility"><svg class="ico" viewBox="0 0 16 16" v-html="icons.listvis"></svg></button>
            <button class="tool" aria-label="List By Selection"><svg class="ico" viewBox="0 0 16 16" v-html="icons.listsel"></svg></button>
            <span class="sep"></span>
            <button class="tool" aria-label="Options"><svg class="ico" viewBox="0 0 16 16" v-html="icons.options"></svg></button>
          </div>
          <div class="tree-box">
            <ul class="tree">
              <li v-for="(n, i) in tree" :key="i" :class="'level-' + n.level">
                <button v-if="!n.symbol" class="expander" aria-label="Collapse"></button>
                <svg v-if="n.icon" class="ico" viewBox="0 0 16 16" v-html="icons[n.icon]"></svg>
                <span v-if="n.symbol" :class="['symbol', n.symbol]"></span>
                <label v-if="n.checked !== undefined">
                  <input v-model="n.checked" type="checkbox" />
                  <span class="node">{{ n.text }}</span>
                </label>
                <span v-else-if="n.text" :class="['node', { selected: n.selected }]">{{ n.text }}</span>
              </li>
            </ul>
            <div class="hscroll">
              <button aria-label="Scroll left"><svg viewBox="0 0 10 10"><path d="M7 1L3 5l4 4" /></svg></button>
              <div class="track"><div class="thumb"></div></div>
              <button aria-label="Scroll right"><svg viewBox="0 0 10 10"><path d="M3 1l4 4-4 4" /></svg></button>
            </div>
            <div class="spot">
              <svg viewBox="0 0 48 48">
                <circle cx="24" cy="24" r="23" fill="#fcfc72" />
                <path d="M24 23v15l4-4 3 6 3-1-3-6h5z" fill="#fff" stroke="#4b4b3c" />
              </svg>
            </div>
          </div>
          <div class="tabs">
            <button><svg class="ico" viewBox="0 0 16 16" v-html="icons.tabtable"></svg>Table</button>
            <button class="current"><svg class="ico" viewBox="0 0 16 16" v-html="icons.tabtoc"></svg>Table Of Contents</button>
          </div>
        </section>

        <section class="mapframe">
          <div class="map-top">
            <svg class="map" viewBox="413 120 829 501">
              <path :d="streets.join('')" stroke="#2f9c56" fill="none" />
              <path
                d="M641 391l16 2M641 410l20 3M640 425l30 3 8 4M655 440l20 4M665 400l-3 30M680 392l-2 40M700 386l5 12M704 384l5 14M708 384l4 12M714 387l28 9-3 10M722 407l6-5h9M657 481h12l-1 10M636 292l34-1M649 302v18M770 378l-20 8M830 362l-5 12M884 451l12 3M774 494l8-16 10-4M910 342l12 8v10M690 333l8-6"
                stroke="#1f8f47"
                fill="none"
              />
              <path d="M826 260l17-10" stroke="#12802f" stroke-width="4" />
              <g fill="#7d1932" stroke="#20060d">
                <path v-for="([x, y], i) in junctionDots" :key="i" :d="`M${x - 3} ${y}l3-3 3 3-3 3z`" />
              </g>
              <g fill="#4a0d1e" stroke="#0d0204">
                <path v-for="([x, y], i) in railwayDots" :key="i" :d="`M${x - 2} ${y}l2-2 2 2-2 2z`" />
              </g>
              <path d="M841 246l2-2 4 4-2 2z" fill="#2a0910" stroke="#0d0204" />
            </svg>
            <div class="vscroll">
              <button aria-label="Scroll up"><svg viewBox="0 0 10 10"><path d="M1 7l4-4 4 4" /></svg></button>
              <div class="thumb"></div>
              <button aria-label="Scroll down"><svg viewBox="0 0 10 10"><path d="M1 3l4 4 4-4" /></svg></button>
            </div>
          </div>
          <div class="map-foot">
            <button class="view on" aria-label="Data View"><svg viewBox="0 0 16 16" v-html="icons.dataview"></svg></button>
            <button class="view" aria-label="Layout View"><svg viewBox="0 0 16 16" v-html="icons.layoutview"></svg></button>
            <span class="sep"></span>
            <button class="view" aria-label="Refresh"><svg viewBox="0 0 16 16" v-html="icons.refresh"></svg></button>
            <button class="view" aria-label="Pause drawing"><svg viewBox="0 0 16 16" v-html="icons.pause"></svg></button>
            <div class="hscroll">
              <button aria-label="Scroll left"><svg viewBox="0 0 10 10"><path d="M7 1L3 5l4 4" /></svg></button>
              <div class="track"><div class="thumb"></div></div>
              <button aria-label="Scroll right"><svg viewBox="0 0 10 10"><path d="M3 1l4 4-4 4" /></svg></button>
            </div>
          </div>
        </section>

        <aside class="rail rail-right">
          <button class="rail-tab catalog"><svg class="ico" viewBox="0 0 16 16" v-html="icons.catalog"></svg>Catalog</button>
          <button class="rail-tab search"><svg class="ico" viewBox="0 0 16 16" v-html="icons.search"></svg>Search</button>
          <button class="rail-tab create"><svg class="ico" viewBox="0 0 16 16" v-html="icons.create"></svg>Create Features</button>
        </aside>
      </main>

      <div :class="['toolrow', r.name]">
        <div v-for="bar in r.bars" :key="bar.label" class="toolbar" role="toolbar" :aria-label="bar.label">
          <span class="grip"></span>
          <template v-for="(it, i) in bar.items" :key="i">
            <span v-if="it.type === 'sep'" class="sep"></span>
            <span v-else-if="it.type === 'gap'" :class="['gap', { narrow: it.narrow }]"></span>
            <button v-else-if="it.type === 'menu'" class="menu">
              {{ it.text }}<svg class="drop" viewBox="0 0 6 6"><path d="M0 1h6L3 5z" /></svg>
            </button>
            <button v-else-if="it.type === 'button'" :class="['tool', { active: it.active, pressed: it.pressed }]" :aria-label="it.icon">
              <svg class="ico" viewBox="0 0 16 16" v-html="icons[it.icon]"></svg>
              <svg v-if="it.arrow" :class="['drop', { muted: it.muted }]" viewBox="0 0 6 6"><path d="M0 1h6L3 5z" /></svg>
            </button>
            <div v-else-if="it.type === 'select'" :class="['combo', it.kind]">
              <svg v-if="it.kind === 'layer'" class="combo-icon" viewBox="0 0 16 16">
                <path d="M1 8l7-6 7 6-7 6z" fill="#f9d99a" stroke="#b9873f" />
                <path d="M7 4h2v2H7zM4 7h2v2H4zM10 7h2v2h-2z" fill="#5a3713" />
              </svg>
              <select :aria-label="it.label"><option>{{ it.text }}</option></select>
              <span v-if="it.kind === 'layer'" class="combo-button"><svg class="drop" viewBox="0 0 6 6"><path d="M0 1h6L3 5z" /></svg></span>
              <svg v-else class="chevron" viewBox="0 0 10 10"><path d="M1 3l4 4 4-4" /></svg>
            </div>
            <div v-else-if="it.type === 'spin'" class="spin">
              <input v-model="threshold" aria-label="Threshold" />
              <div class="spin-buttons">
                <button aria-label="Up"><svg class="drop" viewBox="0 0 6 6"><path d="M0 5h6L3 1z" /></svg></button>
                <button aria-label="Down"><svg class="drop" viewBox="0 0 6 6"><path d="M0 1h6L3 5z" /></svg></button>
              </div>
            </div>
            <input v-else v-model="georefValue" class="angle" aria-label="Rotation" />
          </template>
          <button class="overflow" aria-label="Toolbar options">
            <svg viewBox="0 0 9 20">
              <path v-if="bar.more" d="M1 1l3 2-3 2zM5 1l3 2-3 2z" />
              <path d="M2 12h6v1H2zM2 15h6l-3 3z" />
            </svg>
          </button>
        </div>
      </div>
    </template>

    <footer class="taskbar">
      <button class="start" aria-label="Start">
        <svg viewBox="0 0 16 16"><path d="M0 2l7-1v6H0zM8 1l8-1v7H8zM0 8h7v7l-7-1zM8 8h8v8l-8-1z" /></svg>
      </button>
      <label class="search-box">
        <svg class="lens" viewBox="0 0 16 16"><circle cx="10" cy="6" r="5" /><path d="M6 10l-5 5" /></svg>
        <input type="text" placeholder="Type here to search" aria-label="Type here to search" />
        <svg class="scene" viewBox="0 0 72 30">
          <path d="M20 12l8-6 6-5 5 3 5-1 10 9 6-4 12 8v14H20z" fill="#c5d3ee" />
          <path d="M30 5l5-4 5 3-4 3z" fill="#f0e6f2" />
          <path d="M0 30Q10 10 30 7q22 1 36 23z" fill="#2f6f86" />
          <path d="M4 24Q14 9 32 8l10 4-22 18H2z" fill="#2a5f72" />
          <path d="M33 14q-14 0-15 4 1 2 8 3 7 2-12 9h10q12-6 8-10-9-3-8-4 2-2 9-3z" fill="#eef6fb" />
          <path d="M57 16l4-8 5 10 6 4v8H55z" fill="#4a8a3c" />
          <path d="M66 10l6 8v12h-8z" fill="#7fa8d2" />
          <path d="M38 19l10-8 12 9v10H38z" fill="#b1643c" />
          <path d="M38 24h22M38 27h22" stroke="#7d3f24" fill="none" />
          <path d="M34 21l14-11 16 13" stroke="#eef0fa" stroke-width="3" fill="none" />
          <path d="M42 22h4v3h-4z" fill="#ffd76b" />
          <path d="M50 22h4v8h-4z" fill="#5d2b1c" />
        </svg>
      </label>
      <button class="task-view" aria-label="Task View">
        <svg viewBox="0 0 16 16"><path d="M1 1v3h9V1M1 15v-3h9v3M1 5h9v6H1zM14 1v4M14 9v6M13 6h2v1h-2z" /></svg>
      </button>
      <div class="tray">
        <span class="clipped">ces</span>
        <span class="more">»</span>
        <button class="weather">
          <svg viewBox="0 0 24 16"><path d="M6 15a5 5 0 0 1-1-9 7 7 0 0 1 12-1 5 5 0 0 1 2 10z" fill="#a9c5f5" /><path d="M6 15a5 5 0 0 1-3-8q9 5 18 1a5 5 0 0 1-2 7z" fill="#cfdef9" /></svg>
          <span>13°C</span><span>Cloudy</span>
        </button>
        <div class="status">
          <svg viewBox="0 0 16 16"><path d="M3 11l5-6 5 6" /></svg>
          <svg viewBox="0 0 16 16"><path d="M3 5h7v7H3zM10 8l3-2v5l-3-2M4 2q3-1 5 0M4 15q3 1 5 0" /></svg>
          <svg viewBox="0 0 16 16"><path d="M4 13a3 3 0 0 1 0-6 5 5 0 0 1 8-1 4 4 0 0 1 1 7z" fill="#e6e9ea" /></svg>
          <svg viewBox="0 0 16 16"><path d="M3 15Q3 4 14 3M6 15q0-8 8-9M9 15q0-5 5-6M12 15v-3h2" /></svg>
          <svg viewBox="0 0 16 16"><path d="M1 4h12v8H1zM14 6h1v4h-1" /><path d="M3 6h6v4H3z" fill="#fff" /></svg>
          <svg viewBox="0 0 16 16"><path d="M1 6h3l4-3v10l-4-3H1zM10 6q1 2 0 4M12 4q3 4 0 8" /></svg>
        </div>
        <span class="lang">ENG</span>
        <time class="clock"><span>22:52</span><span>09-01-2023</span></time>
        <button class="notes" aria-label="Notifications">
          <svg viewBox="0 0 16 16"><path d="M7 13H1V1h14v9M7 13l3 3v-3M12 10l2 3a2 2 0 1 1-3 0z" /></svg>
        </button>
      </div>
    </footer>

    <!-- screen sharing banner -->
    <div class="share">
      <div class="share-state">
        <svg viewBox="0 0 12 12"><path d="M10 1Q5 1 5 5H2l4 6 4-4H8q-1-4 2-6z" /></svg>
        <span>You are screen sharing</span>
        <svg viewBox="0 0 12 12"><path d="M4 1h4v6H4zM2 5q0 4 4 4t4-4H9q0 3-3 3T3 5zM5 9h2v3H5z" /><path d="M1 12L11 0" stroke="#0d6a2b" /></svg>
        <svg viewBox="0 0 12 12"><path d="M6 0l5 2v4q0 4-5 6-5-2-5-6V2z" /><path d="M3 6l2 2 4-4" stroke="#22d85c" stroke-width="2" fill="none" /></svg>
      </div>
      <button class="stop"><span class="square"></span>Stop Share</button>
    </div>

    <!-- recorder strip -->
    <div class="recorder">
      <div class="knob">
        <button aria-label="Pause recording"><svg viewBox="0 0 16 16"><path d="M5 1v14M11 1v14" stroke="#fff" stroke-width="3" /></svg></button>
      </div>
      <div class="elapsed"><span>Recording...</span><strong>00:04:24</strong></div>
      <div class="levels"><i></i><i></i><i></i><i></i><i></i></div>
      <label class="volume">
        <svg viewBox="0 0 60 14"><path d="M0 14L60 0v14z" fill="#dcebf5" /></svg>
        <input v-model="volume" type="range" min="0" max="100" aria-label="Volume" />
      </label>
      <button class="cam" aria-label="Webcam">
        <svg viewBox="0 0 24 24"><circle cx="11" cy="10" r="9" /><circle cx="11" cy="10" r="5" /><circle cx="11" cy="10" r="3" fill="#333" /><path d="M3 19q3 4 13 3M17 21h6M20 18v6" /></svg>
      </button>
      <button class="draw" aria-label="Draw">
        <svg viewBox="0 0 24 24"><path d="M2 22l2-7L17 2l5 5L9 20z" fill="#333" /><path d="M15 5l4 4M4 15l5 5" stroke="#fff" /><path d="M3 20l1-4 4 4-4 1z" fill="#fff" /></svg>
      </button>
    </div>
  </div>
</template>

<style>
body {
  background: #86bc25;
}
</style>

<style scoped>
* {
  box-sizing: border-box;
}

.desktop {
  position: relative;
  display: flex;
  flex-direction: column;
  height: 100vh;
  min-height: 480px;
  border: 5px solid #86bc25;
  border-top-width: 4px;
  background: #f0f3ef;
  color: #1b1d1b;
  font: 12px/16px 'Open Sans', 'Noto Sans', sans-serif;
}

/* thin dark edges of the sharing frame */
.desktop::before,
.desktop::after {
  content: '';
  position: absolute;
  height: 1px;
  background: #4b7419;
}

.desktop::before {
  top: -4px;
  left: 22%;
  right: 5%;
}

.desktop::after {
  bottom: -5px;
  left: 0;
  right: 0;
}

button,
input,
select {
  margin: 0;
  padding: 0;
  border: 0;
  border-radius: 0;
  background: none;
  color: inherit;
  font: inherit;
}

svg {
  flex: none;
  display: block;
}

h1,
h2 {
  margin: 0;
  font: inherit;
}

.ico {
  width: 16px;
  height: 16px;
  fill: none;
  stroke: #a6aaa6;
}

/* title and menu */
.titlebar {
  flex: none;
  display: flex;
  align-items: center;
  height: 18px;
  padding-bottom: 3px;
  background: #fdfffd;
  font-size: 11px;
}

.app-icon {
  width: 13px;
  height: 14px;
  margin-right: 4px;
  fill: none;
}

.window-buttons {
  display: flex;
  gap: 30px;
  margin-left: auto;
  padding-right: 13px;
}

.window-buttons svg {
  width: 12px;
  height: 12px;
  fill: none;
  stroke: #222;
}

.menubar {
  flex: none;
  display: flex;
  align-items: center;
  gap: 14px;
  height: 23px;
  padding-left: 6px;
  font-size: 11px;
}

/* toolbars */
.toolrow {
  flex: none;
  display: flex;
  align-items: center;
  height: 24px;
  overflow: hidden;
  font-size: 11px;
}

.toolbar {
  flex: none;
  display: flex;
  align-items: center;
  height: 23px;
  margin-right: 6px;
  background: #f7f9f6;
}

.effects {
  margin-bottom: 1px;
  padding-left: 36px;
}

.topology {
  padding-left: 480px;
}

.layout {
  padding-left: 242px;
}

.grip {
  width: 3px;
  height: 16px;
  margin-right: 1px;
  border-left: 2px dotted #b3b7b3;
}

.sep {
  width: 1px;
  height: 14px;
  margin: 0 2px;
  background: #bfc3bf;
}

.gap {
  width: 16px;
}

.gap.narrow {
  width: 12px;
}

.tool {
  display: flex;
  align-items: center;
  justify-content: center;
  gap: 2px;
  min-width: 21px;
  height: 21px;
}

.tool .drop {
  margin-right: 3px;
}

.tool.active {
  border: 1px solid #3a8ec8;
  background: #d5e9f7;
}

.tool.pressed {
  border: 1px solid #9aa3ad;
  background: #dde2e8;
}

.drop {
  width: 6px;
  height: 6px;
  fill: #222;
}

.drop.muted {
  fill: #9da19d;
}

.menu {
  display: flex;
  align-items: center;
  gap: 3px;
  padding: 0 2px 0 5px;
}

.overflow {
  align-self: stretch;
  width: 9px;
  margin-left: 3px;
  background: linear-gradient(#f0f2ef, #b4b8b4);
}

.overflow svg {
  width: 9px;
  height: 20px;
  fill: #111;
}

.combo {
  position: relative;
  display: flex;
  height: 20px;
  border: 1px solid #a4a8a4;
  background: #fdfffd;
}

.combo select {
  flex: 1;
  min-width: 0;
  padding-left: 3px;
  appearance: none;
}

.chevron {
  position: absolute;
  top: 5px;
  right: 4px;
  width: 9px;
  height: 9px;
  fill: none;
  stroke: #777b77;
}

.combo.layer {
  width: 167px;
  border-color: #6d716d;
}

.combo-icon {
  width: 16px;
  height: 16px;
  margin: 1px 0 1px 1px;
}

.combo.layer select {
  padding-left: 1px;
}

.combo-button {
  flex: none;
  display: flex;
  align-items: center;
  justify-content: center;
  width: 14px;
  margin: 1px;
  border: 1px solid #b8bcb8;
  background: #eef1ee;
}

.combo.georef {
  width: 163px;
  border-color: #c8ccc8;
  background: #c9cdc9;
}

.combo.network {
  width: 167px;
  background: #e2e5e2;
}

.combo.network select {
  padding-left: 2px;
}

.combo.scale {
  width: 55px;
}

.combo.scale select {
  flex: none;
  width: 26px;
  height: 12px;
  margin: 3px 2px;
  background: #1c74cc;
  color: #1a5c9f;
  font-size: 9px;
}

.spin {
  display: flex;
  width: 55px;
  height: 20px;
  border: 1px solid #8e928e;
  background: #fdfffd;
}

.spin input {
  flex: 1;
  min-width: 0;
  padding-left: 3px;
}

.spin-buttons {
  display: flex;
  flex-direction: column;
  width: 14px;
}

.spin-buttons button {
  flex: 1;
  display: flex;
  align-items: center;
  justify-content: center;
  border: 1px solid #c5c9c5;
  background: #f0f3ef;
}

.angle {
  width: 69px;
  height: 17px;
  margin: 0 4px;
  border: 1px solid #555955;
  background: #fdfffd;
}

/* workspace */
.workspace {
  flex: 1;
  display: flex;
  min-height: 0;
}

.rail {
  display: flex;
  flex-direction: column;
  width: 14px;
  padding-top: 2px;
}

.rail-tab {
  display: flex;
  align-items: center;
  gap: 4px;
  width: 14px;
  padding: 2px 0 3px;
  border: 1px solid #a9ada9;
  color: #6b6f6b;
  font-size: 11px;
  line-height: 14px;
  white-space: nowrap;
  writing-mode: vertical-rl;
}

.rail-left .rail-tab {
  border-left: 0;
  border-radius: 0 4px 4px 0;
}

.rail-right .rail-tab {
  border-right: 0;
  border-radius: 4px 0 0 4px;
}

.rail-tab.results,
.rail-tab.create {
  margin-top: 13px;
}

.panel {
  display: flex;
  flex-direction: column;
}

.panel-head {
  display: flex;
  align-items: center;
  height: 19px;
  padding: 0 3px;
  background: linear-gradient(90deg, #c4d3e2, #d6e1ea);
  font-size: 11px;
}

.panel-head h2 {
  flex: 1;
  white-space: nowrap;
}

.panel-head svg {
  width: 10px;
  height: 10px;
  margin-left: 4px;
  fill: none;
}

.analyst {
  width: 125px;
  margin-left: 4px;
}

.analyst .panel-head {
  padding: 0 1px;
}

.analyst-pick {
  display: flex;
  gap: 4px;
  margin: 3px 0;
}

.analyst-pick .combo {
  flex: 1;
  height: 21px;
}

.analyst-pick .chevron {
  top: 6px;
}

.props {
  display: flex;
  align-items: center;
  justify-content: center;
  width: 18px;
  height: 18px;
  background: #d6d9d6;
}

.props .ico {
  width: 13px;
  height: 13px;
}

.analyst-list {
  flex: 1;
  border: 1px solid #9a9e9a;
  background: #fdfffd;
}

.analyst-status {
  height: 18px;
  margin: 4px 0 2px;
  border: 1px solid #d0d3d0;
  border-top-color: #a7aba7;
}

.contents {
  width: 252px;
  margin-left: 7px;
}

.contents-tools {
  display: flex;
  align-items: center;
  height: 24px;
  padding-left: 2px;
}

.tree-box {
  position: relative;
  flex: 1;
  display: flex;
  flex-direction: column;
  min-height: 0;
  padding: 0 1px 1px;
  border: 1px solid #8e928e;
  background: #fdfffd;
}

.tree {
  flex: 1;
  margin: 0;
  padding: 0;
  overflow: hidden;
  list-style: none;
  font-size: 11px;
}

.tree li,
.tree label {
  display: flex;
  align-items: center;
  height: 17px;
  white-space: nowrap;
}

.level-1 {
  padding-left: 6px;
}

.level-2 {
  padding-left: 22px;
}

.level-3 {
  padding-left: 41px;
}

.level-4 {
  padding-left: 72px;
}

.expander {
  position: relative;
  flex: none;
  width: 9px;
  height: 9px;
  margin-right: 5px;
  border: 1px solid #a9ada9;
}

.expander::after {
  content: '';
  position: absolute;
  inset: 3px 1px;
  background: #555;
}

.level-2 .expander {
  margin-right: 3px;
}

.node {
  padding-left: 2px;
}

.node.selected {
  margin-left: 2px;
  padding: 0 2px;
  background: #0a72ce;
  color: #fff;
  font-weight: 600;
}

.symbol + .node {
  padding-left: 4px;
}

.tree input {
  display: grid;
  place-items: center;
  width: 11px;
  height: 11px;
  margin-right: 3px;
  margin-left: 2px;
  border: 1px solid #222;
  background: #fff;
  appearance: none;
}

.tree label .node {
  padding-left: 4px;
}

.tree input:checked::after {
  content: '';
  width: 3px;
  height: 6px;
  margin-bottom: 2px;
  border: solid #111;
  border-width: 0 2px 2px 0;
  transform: rotate(40deg);
}

.symbol {
  width: 12px;
  height: 1px;
}

.symbol.point {
  width: 5px;
  height: 5px;
  margin-left: 2px;
  border: 1px solid #1a0509;
  border-radius: 2px;
  background: #7a1731;
}

.symbol.road {
  background: #3c9468;
}

.symbol.edge {
  background: #b4b8b4;
}

/* pointer halo over the tree */
.spot {
  position: absolute;
  top: 130px;
  left: 137px;
}

.spot svg {
  width: 48px;
  height: 48px;
}

.hscroll {
  display: flex;
  align-items: center;
  height: 15px;
  background: #f0f3ef;
}

.hscroll button,
.vscroll button {
  display: flex;
  align-items: center;
  justify-content: center;
  width: 15px;
  height: 15px;
}

.hscroll svg,
.vscroll svg {
  width: 8px;
  height: 8px;
  fill: none;
  stroke: #444;
  stroke-width: 2;
}

.track {
  flex: 1;
  height: 13px;
}

.thumb {
  height: 100%;
  background: #c9cdc9;
}

.tree-box .thumb {
  width: 62%;
}

.tabs {
  display: flex;
  height: 20px;
  padding-left: 2px;
  font-size: 11px;
}

.tabs button {
  display: flex;
  align-items: center;
  gap: 2px;
  height: 18px;
  padding: 0 3px 0 2px;
  border: 1px solid #a9ada9;
  border-top: 0;
  border-radius: 0 0 4px 4px;
  color: #7d817d;
}

.tabs .ico {
  width: 15px;
  height: 15px;
}

.tabs .current {
  background: #fdfffd;
  color: #1b1d1b;
}

.mapframe {
  flex: 1;
  display: flex;
  flex-direction: column;
  min-width: 0;
  margin: 1px 4px 2px 5px;
  border-top: 1px solid #555955;
  border-left: 1px solid #555955;
}

.map-top {
  flex: 1;
  display: flex;
  min-height: 0;
}

.map {
  flex: 1;
  min-width: 0;
  background: #fdfffd;
}

.vscroll {
  display: flex;
  flex-direction: column;
  width: 15px;
  background: #f0f3ef;
}

.vscroll .thumb {
  flex: 1;
  width: 12px;
  margin-left: 2px;
}

.map-foot {
  display: flex;
  align-items: center;
  height: 16px;
  margin-right: 15px;
}

.view {
  display: flex;
  align-items: center;
  justify-content: center;
  width: 16px;
  height: 16px;
}

.view svg {
  width: 11px;
  height: 11px;
  fill: none;
}

.view.on {
  background: #bcd5ec;
}

.map-foot .hscroll {
  flex: 1;
}

.rail-right {
  margin-left: auto;
}

.toolrow.layout {
  height: 25px;
  margin-bottom: 19px;
}

/* taskbar */
.taskbar {
  flex: none;
  display: flex;
  height: 32px;
  background: #1c2123;
  color: #f3f5f3;
}

.start {
  width: 40px;
}

.start svg {
  width: 16px;
  height: 16px;
  margin: 3px 0 0 10px;
  fill: #fff;
}

.search-box {
  display: flex;
  align-items: center;
  width: 322px;
  padding-left: 11px;
  background: #f1f4f0;
}

.lens {
  width: 16px;
  height: 16px;
  margin: 4px 10px 0 0;
  fill: none;
  stroke: #222;
}

.search-box input {
  flex: 1;
  min-width: 0;
  padding-top: 5px;
  color: #444;
  font-size: 13px;
}

.search-box input::placeholder {
  color: #4a4d4a;
  opacity: 1;
}

.scene {
  align-self: flex-end;
  width: 72px;
  height: 30px;
}

.task-view {
  width: 44px;
}

.task-view svg {
  width: 16px;
  height: 16px;
  margin: 3px auto 0;
  fill: none;
  stroke: #e8ebe8;
}

.tray {
  display: flex;
  align-items: center;
  margin-left: auto;
  padding: 4px 17px 0 0;
}

.clipped {
  margin-right: 6px;
  font-size: 10px;
}

.more {
  align-self: flex-start;
  margin-right: 15px;
  font-size: 16px;
  line-height: 6px;
}

.weather {
  display: flex;
  align-items: center;
  gap: 8px;
  font-size: 13px;
}

.weather svg {
  width: 24px;
  height: 16px;
}

.status {
  display: flex;
  gap: 6px;
  margin: 0 9px 0 19px;
}

.status svg {
  width: 16px;
  height: 16px;
  fill: none;
  stroke: #e6e9ea;
}

.lang {
  margin-right: 11px;
  font-size: 11px;
}

.clock {
  display: flex;
  flex-direction: column;
  align-items: center;
  margin-right: 17px;
  font-size: 11px;
}

.notes svg {
  width: 16px;
  height: 16px;
  fill: none;
  stroke: #e6e9ea;
}

/* overlays */
.share {
  position: absolute;
  z-index: 1;
  top: -3px;
  left: 570px;
  display: flex;
  height: 20px;
  overflow: hidden;
  border-radius: 0 0 5px 5px;
  background: #22d85c;
  font-size: 11px;
  font-weight: 600;
}

.share-state {
  display: flex;
  align-items: center;
  width: 250px;
  padding: 0 10px;
  color: #1b5c2f;
}

.share-state svg {
  width: 12px;
  height: 12px;
  margin-right: 11px;
  fill: #0d6a2b;
}

.share-state svg:last-child {
  margin-right: 0;
}

.share-state span {
  flex: 1;
  text-align: center;
}

.stop {
  display: flex;
  align-items: center;
  gap: 5px;
  width: 90px;
  padding-left: 7px;
  background: #df2929;
  color: #fbe3e0;
}

.square {
  width: 8px;
  height: 8px;
  margin-bottom: 2px;
  background: #fff;
}

.recorder {
  position: absolute;
  z-index: 1;
  bottom: -5px;
  left: 413px;
  display: flex;
  align-items: center;
  width: 406px;
  height: 43px;
  border-radius: 5px 5px 0 0;
  background: #fdfffd;
  box-shadow: 0 0 5px #555;
}

.knob {
  display: flex;
  align-items: center;
  justify-content: center;
  width: 68px;
  height: 43px;
  margin-right: 22px;
  padding-top: 8px;
  border-radius: 5px 12px 8px 0 / 5px 28px 14px 0;
  background: #303331;
}

.knob button {
  display: flex;
  align-items: center;
  justify-content: center;
  width: 34px;
  height: 34px;
  border-radius: 50%;
  background: #0f93d8;
  box-shadow: 0 0 3px 2px #14577d;
}

.knob svg {
  width: 15px;
  height: 15px;
}

.elapsed {
  display: flex;
  flex-direction: column;
  align-self: flex-end;
  width: 111px;
  height: 38px;
  padding: 1px 0 0 6px;
  background: #eff1ef;
  color: #222;
}

.elapsed strong {
  margin-top: 4px;
  color: #000;
  font-size: 14px;
}

.levels {
  display: flex;
  gap: 2px;
  height: 22px;
  margin: 6px 22px 0 15px;
}

.levels i {
  width: 2px;
  background: #d9dcd9;
}

.volume {
  position: relative;
  width: 62px;
  margin-right: 11px;
  padding-top: 10px;
}

.volume svg {
  width: 60px;
  height: 14px;
}

.volume input {
  position: absolute;
  bottom: -4px;
  left: 0;
  width: 62px;
  height: 10px;
  background: linear-gradient(#2a86bd, #2a86bd) center / 100% 2px no-repeat;
  appearance: none;
}

.volume input::-webkit-slider-thumb {
  width: 2px;
  height: 10px;
  background: #2a86bd;
  appearance: none;
}

.cam,
.draw {
  margin-right: 14px;
  padding-top: 8px;
}

.cam svg,
.draw svg {
  width: 24px;
  height: 24px;
  fill: none;
  stroke: #333;
}
</style>
